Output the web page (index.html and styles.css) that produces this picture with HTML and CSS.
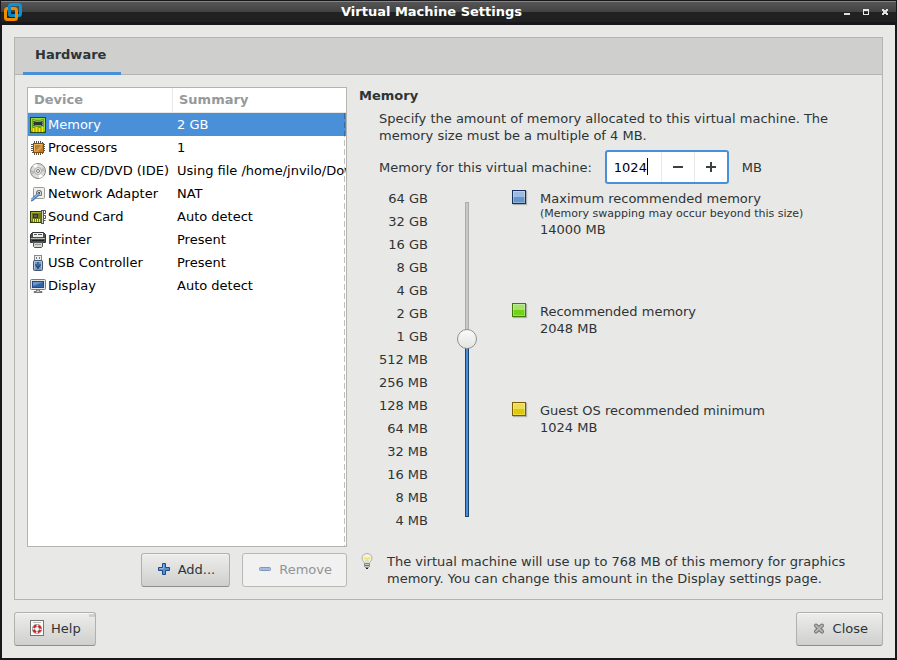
FILE: index.html
```html
<!DOCTYPE html>
<html lang="en">
<head>
<meta charset="utf-8">
<title>Virtual Machine Settings</title>
<link rel="stylesheet" href="styles.css">
</head>
<body>
<div class="window">
  <header class="titlebar">
    <svg class="app-icon" viewBox="0 0 18 18" width="18" height="18" fill="none" stroke-width="3">
      <rect x="5.500" y="1.500" width="11" height="11" rx="2" stroke="#0795d3"/>
      <rect x="1.500" y="5.500" width="11" height="11" rx="2" stroke="#f18b00"/>
      <path d="M5.500 3.500v7.500a1.500 1.500 0 0 0 1.500 1.500h2.500" stroke="#0b86bd" stroke-width="3"/>
    </svg>
    <h1 class="title">Virtual Machine Settings</h1>
    <div class="window-controls">
      <button class="wm" type="button" aria-label="Minimize"><svg viewBox="0 0 6 6" width="6" height="6"><path d="M0 4h6v2H0z" fill="#e0e0e0"/></svg></button>
      <button class="wm" type="button" aria-label="Maximize"><svg viewBox="0 0 6 6" width="6" height="6"><path fill-rule="evenodd" d="M0 0h6v6H0zM1 2v3h4V2z" fill="#e8e8e8"/></svg></button>
      <button class="wm" type="button" aria-label="Close window"><svg viewBox="0 0 6 6" width="6" height="6"><path d="M0 0h2v1h2V0h2v2H5v2h1v2H4V5H2v1H0V4h1V2H0z" fill="#e0e0e0"/></svg></button>
    </div>
  </header>

  <main class="dialog">
    <section class="notebook">
      <nav class="tabs"><button class="tab" type="button">Hardware</button></nav>
      <div class="page">
        <div class="devices">
          <div class="list">
            <table>
              <thead><tr><th>Device</th><th>Summary</th></tr></thead>
              <tbody>
                <tr class="selected">
                  <td><span class="device"><svg viewBox="0 0 16 16" width="16" height="16"><rect x=".5" y=".5" width="15" height="15" fill="#68a818" stroke="#254f05"/><path d="M1.500 14V1.500h13V14" fill="none" stroke="#9bdb35"/><rect x="3" y="4" width="10" height="5" fill="#555753"/><path d="M4 3v7M6 2v8M8 2v8M10 2v8M12 3v7" stroke="#c9ccc5" stroke-dasharray="1 1"/><rect x="4" y="5" width="8" height="3" fill="#30342f"/><path d="M2 11h12v4H2z" fill="#7d8600"/><path d="M3.500 11v4M6.500 10v5M9.500 11v4M12.500 10v5" stroke="#fce900" stroke-width="2"/></svg>Memory</span></td>
                  <td>2 GB</td>
                </tr>
                <tr>
                  <td><span class="device"><svg viewBox="0 0 16 16" width="16" height="16"><path d="M4.500 1v14M6.500 1v14M8.500 1v14M10.500 1v14M12.500 2v12M1 4.500h14M1 6.500h14M1 8.500h14M1 10.500h14M2 12.500h12" stroke="#555753"/><rect x="3.500" y="3.500" width="10" height="9" fill="#c17d24" stroke="#8f4b02"/><path d="M4.500 11.500v-7h8" fill="none" stroke="#edb866"/><path d="M5 11l6-6h1v3l-4 4H5z" fill="#d39a4c"/></svg>Processors</span></td>
                  <td>1</td>
                </tr>
                <tr>
                  <td><span class="device"><svg viewBox="0 0 16 16" width="16" height="16"><circle cx="8" cy="8" r="7.500" fill="#dcdcda" stroke="#888a85"/><path d="M8 8L3 2.500a7 7 0 0 1 4-1.400zM8 8l5 5.500a7 7 0 0 1-4 1.400z" fill="#fff"/><path d="M8 8l6-3.500a7 7 0 0 1 1 4zM8 8l-6 3.500a7 7 0 0 1-1-4z" fill="#bcbdb9"/><circle cx="8" cy="8" r="3.500" fill="#eee" stroke="#aaa"/><circle cx="8" cy="8" r="1.500" fill="#fff" stroke="#777"/></svg>New CD/DVD (IDE)</span></td>
                  <td>Using file /home/jnvilo/Dow</td>
                </tr>
                <tr>
                  <td><span class="device"><svg viewBox="0 0 16 16" width="16" height="16"><rect x="3.500" y="1.500" width="11" height="11" rx="1" fill="#eeeeec" stroke="#9a9c97"/><path d="M6.500 9.500v-4h1v-1h3v1h1v4z" fill="#d3d7cf" stroke="#777a75"/><rect x="8" y="6" width="2" height="2" fill="#555753"/><path d="M1 14c2 0 2-1 4-3l4-3" fill="none" stroke="#4f7fbc" stroke-width="3"/><path d="M1 13.500c2 0 2-1 4-3l4-3" fill="none" stroke="#a9c6e8"/></svg>Network Adapter</span></td>
                  <td>NAT</td>
                </tr>
                <tr>
                  <td><span class="device"><svg viewBox="0 0 16 16" width="16" height="16"><rect x=".5" y="2.500" width="11" height="11" fill="#747c13" stroke="#313d05"/><path d="M1.500 12V3.500H11" fill="none" stroke="#a6b22a"/><path d="M3 5h5v4H3z" fill="#2e3436"/><path d="M4 6h3v2H4z" fill="#5d6358"/><path d="M3.500 10v3M5.500 10v3M7.500 10v3M9.500 10v3" stroke="#f8ee20"/><path d="M12.500 1v14" stroke="#555753" stroke-width="3"/><path d="M14 1.500h1.500v3H14M14 6.500h1.500v3H14M14 11.500h1.500" fill="none" stroke="#555753"/><path d="M12.500 2v12" stroke="#d3d7cf"/></svg>Sound Card</span></td>
                  <td>Auto detect</td>
                </tr>
                <tr>
                  <td><span class="device"><svg viewBox="0 0 16 16" width="16" height="16"><path d="M.5 6.500v-4l2-2h11l2 2v8h-2l-1 1h-9l-1-1h-2z" fill="#4a4d4f" stroke="#2e3436"/><rect x="3" y="1" width="10" height="4" fill="#eeeeec"/><path d="M4 2.500h3M8 2.500h4" stroke="#555"/><path d="M1 6.500h14" stroke="#babdb6"/><path d="M2 8.500h12" stroke="#1d2022"/><path d="M3.500 10.500h9v4l-1 1h-7l-1-1z" fill="#d3d7cf" stroke="#555753"/><path d="M5 12.500h6" stroke="#999"/></svg>Printer</span></td>
                  <td>Present</td>
                </tr>
                <tr>
                  <td><span class="device"><svg viewBox="0 0 16 16" width="16" height="16"><rect x="4.500" y=".5" width="7" height="5" fill="#eeeeec" stroke="#888a85"/><path d="M6 2h1v2H6zM9 2h1v2H9z" fill="#777"/><rect x="3.500" y="5.500" width="9" height="10" rx="1" fill="#6d98c9" stroke="#47566a"/><path d="M4.500 14.500v-8h7v8" fill="none" stroke="#a8c5e5"/><path d="M8 7v7M6 9v2l2 1.500 2-1.500V9" fill="none" stroke="#15375f"/></svg>USB Controller</span></td>
                  <td>Present</td>
                </tr>
                <tr>
                  <td><span class="device"><svg viewBox="0 0 16 16" width="16" height="16"><rect x=".5" y="1.500" width="15" height="10" rx="1" fill="#e4e6e1" stroke="#77797a"/><rect x="2.500" y="3.500" width="11" height="6" fill="#3465a4" stroke="#204a87"/><path d="M3 4h10L3 8z" fill="#6b96c9"/><path d="M6.500 12h3v1.500h2.500v1H4v-1h2.500z" fill="#d3d7cf" stroke="#777"/></svg>Display</span></td>
                  <td>Auto detect</td>
                </tr>
              </tbody>
            </table>
          </div>
          <div class="list-actions">
            <button class="button" type="button"><svg viewBox="0 0 14 14" width="14" height="14"><path d="M5.500 1.500h3v4h4v3h-4v4h-3v-4h-4v-3h4z" fill="#5b8fce" stroke="#204a87" stroke-linejoin="round"/><path d="M6.500 2.500v4h-4" fill="none" stroke="#8fb6e2"/></svg>Add...</button>
            <button class="button" type="button" disabled><svg viewBox="0 0 14 14" width="14" height="14"><rect x="1.500" y="5.500" width="11" height="3" rx="1" fill="#a3bddd" stroke="#8197b8"/></svg>Remove</button>
          </div>
        </div>

        <div class="settings">
          <h2>Memory</h2>
          <p class="intro">Specify the amount of memory allocated to this virtual machine. The memory size must be a multiple of 4 MB.</p>
          <div class="amount">
            <label for="memory">Memory for this virtual machine:</label>
            <div class="spin">
              <input id="memory" type="text" inputmode="numeric" value="1024">
              <span class="caret"></span>
              <button type="button" aria-label="Decrease"><svg viewBox="0 0 12 12" width="12" height="12"><path d="M1 5h10v2H1z" fill="#3b4042"/></svg></button>
              <button type="button" aria-label="Increase"><svg viewBox="0 0 12 12" width="12" height="12"><path d="M1 5h4V1h2v4h4v2H7v4H5V7H1z" fill="#3b4042"/></svg></button>
            </div>
            <span>MB</span>
          </div>
          <div class="scale">
            <ol class="ticks">
              <li>64 GB</li><li>32 GB</li><li>16 GB</li><li>8 GB</li><li>4 GB</li><li>2 GB</li><li>1 GB</li><li>512 MB</li><li>256 MB</li><li>128 MB</li><li>64 MB</li><li>32 MB</li><li>16 MB</li><li>8 MB</li><li>4 MB</li>
            </ol>
            <input class="slider" type="range" min="0" max="14" value="8" aria-label="Memory size">
            <ul class="legend">
              <li><i class="swatch blue"></i><div>Maximum recommended memory<small>(Memory swapping may occur beyond this size)</small>14000 MB</div></li>
              <li><i class="swatch green"></i><div>Recommended memory<br>2048 MB</div></li>
              <li><i class="swatch yellow"></i><div>Guest OS recommended minimum<br>1024 MB</div></li>
            </ul>
          </div>
          <div class="hint">
            <svg viewBox="0 0 16 16" width="16" height="16"><path d="M5.500 10.500C5.500 8.500 3 8 3 5a5 4.500 0 0 1 10 0c0 3-2.500 3.500-2.500 5.500z" fill="#f4f3dc" stroke="#aeb0aa"/><path d="M5 4.500c1 2 2 0 3 1.500 1-1.500 2 .5 3-1.500" fill="none" stroke="#ece57c" stroke-width="2"/><path d="M7 7v3M9 7v3" stroke="#c9c9b8"/><path d="M5.500 10.500h5v3l-1 1h-3l-1-1z" fill="#c5c7c2" stroke="#888a85"/><path d="M6 12.500h4" stroke="#777"/><path d="M7 15h2v1H7z" fill="#222"/></svg>
            <p>The virtual machine will use up to 768 MB of this memory for graphics memory. You can change this amount in the Display settings page.</p>
          </div>
        </div>
      </div>
    </section>

    <footer class="actions">
      <button class="button help" type="button"><svg viewBox="1 0 14 16" width="14" height="16"><rect x="1.500" y=".5" width="13" height="15" fill="#fafafa" stroke="#73756f"/><path d="M4 2.500h8" stroke="#babdb6"/><circle cx="8" cy="9" r="3.500" fill="none" stroke="#777" stroke-width="3"/><circle cx="8" cy="9" r="3.500" fill="none" stroke="#eee" stroke-width="2"/><circle cx="8" cy="9" r="3.500" fill="none" stroke="#d01818" stroke-width="2" stroke-dasharray="3.500 2" stroke-dashoffset="-1"/></svg>Help</button>
      <button class="button" type="button"><svg viewBox="0 0 14 14" width="14" height="14"><path d="M4 4.500l6 6M10 4.500l-6 6" stroke="#73756f" stroke-width="4" stroke-linecap="round"/><path d="M4 4.500l6 6M10 4.500l-6 6" stroke="#b5b7b2" stroke-width="2" stroke-linecap="round"/></svg>Close</button>
    </footer>
  </main>
</div>
</body>
</html>
```
FILE: styles.css
```css
* { box-sizing: border-box; }

body {
  margin: 0;
  background: #18171b;
  color: #2e3436;
  font: 13px/17px "DejaVu Sans", sans-serif;
}

button, input { font: inherit; color: inherit; margin: 0; }
h1, h2, p, ol, ul { margin: 0; padding: 0; }
h1, h2 { font-size: 13px; font-weight: bold; }
ol, ul { list-style: none; }
svg { display: block; flex: none; }

.window {
  min-height: 100vh;
  display: flex;
  flex-direction: column;
  padding: 0 2px 2px;
}

.titlebar {
  display: flex;
  height: 25px;
  padding: 2px 5px 3px 3px;
  margin: 0 -1px;
  border-top: 1px solid #18171b;
  background: linear-gradient(#858585 0 1px, #565656 1px, #424242 11px, #212121 11px 21px, #18171b 21px);
}
.title { flex: 1; text-align: center; color: #fff; }
.window-controls { display: flex; gap: 7px; padding-top: 3px; }
.wm {
  width: 12px;
  height: 12px;
  padding: 3px;
  border: 0;
  background: none;
}

.dialog {
  flex: 1;
  display: flex;
  flex-direction: column;
  gap: 12px;
  padding: 12px;
  background: #e8e8e6;
}

.notebook {
  flex: 1;
  display: flex;
  flex-direction: column;
  border: 1px solid #b4b4b2;
}
.tabs {
  display: flex;
  height: 37px;
  padding-left: 8px;
  background: #cfcfcd;
  box-shadow: inset 0 -1px #b4b4b2;
}
.tab {
  min-width: 98px;
  padding: 0 12px 2px;
  border: 0;
  border-bottom: 3px solid #4a90d9;
  background: none;
  font-weight: bold;
  text-align: left;
}

.page {
  flex: 1;
  display: grid;
  grid-template-columns: 320px 1fr;
  gap: 12px;
  padding: 12px;
}

.devices { display: flex; flex-direction: column; gap: 6px; }
.list {
  flex: 1;
  position: relative;
  overflow: hidden;
  border: 1px solid #b4b4b2;
  background: #fff;
  color: #000;
}
.list::after {
  content: "";
  position: absolute;
  top: 25px;
  bottom: 0;
  right: 1px;
  width: 1px;
  background: repeating-linear-gradient(rgba(0, 0, 0, .25) 0 6px, transparent 6px 9px);
}
.list table { width: 100%; table-layout: fixed; border-collapse: separate; border-spacing: 0; }
.list th {
  height: 25px;
  padding: 0 6px 2px;
  border-bottom: 1px solid #e8e8e6;
  text-align: left;
  color: #96999a;
}
.list th:first-child { width: 145px; border-right: 1px solid #e8e8e6; }
.list td { height: 23px; padding: 0 2px; white-space: nowrap; overflow: hidden; }
.list td + td { padding-left: 4px; }
.device { display: flex; align-items: center; gap: 2px; }
.selected { background: #4a90d9; color: #fff; }

.list-actions { display: flex; justify-content: flex-end; gap: 12px; }
.button {
  display: flex;
  align-items: center;
  gap: 7px;
  height: 34px;
  padding: 0 14px 2px 15px;
  border: 1px solid #b0b0ae;
  border-bottom-color: #8e8e8c;
  border-radius: 3px;
  background: linear-gradient(#ededeb, #cfcfcd);
  box-shadow: inset 0 1px #f6f6f5;
}
.button:disabled {
  border-color: #b8b8b6;
  background: #f1f1f1;
  box-shadow: none;
  color: #929496;
}

.intro { margin: 6px 0 6px 20px; max-width: 475px; }
.amount { display: flex; align-items: center; gap: 13px; margin-left: 20px; }
.spin {
  position: relative;
  display: flex;
  height: 34px;
  border: 2px solid #4a90d9;
  border-radius: 3px;
  background: #fff;
}
.spin input {
  width: 54px;
  padding: 0 7px;
  border: 0;
  outline: 0;
  background: none;
  color: #000;
}
.caret {
  position: absolute;
  left: 40px;
  top: 6px;
  width: 1px;
  height: 17px;
  background: #000;
}
.spin button {
  width: 33px;
  display: grid;
  place-items: center;
  padding: 0;
  border: 0;
  border-left: 1px solid #e8e8e6;
  background: none;
}

.scale { display: flex; margin: 3px 0 21px 20px; }
.ticks { flex: none; width: 49px; }
.ticks li {
  display: flex;
  justify-content: flex-end;
  height: 23px;
  line-height: 23px;
  white-space: nowrap;
}
.slider {
  appearance: none;
  flex: none;
  writing-mode: vertical-lr;
  direction: rtl;
  width: 20px;
  height: 315px;
  margin: 15px 35px 0 29px;
  background: none;
}
.slider::-webkit-slider-runnable-track {
  width: 4px;
  height: 100%;
  border: 1px solid #acacaa;
  border-radius: 2px;
  background: linear-gradient(90deg, #4a90d9, #4a90d9) 0 100% / 100% 57% no-repeat border-box, #c8c8c6;
  border-image: linear-gradient(#acacaa 43%, #184472 43%) 1;
}
.slider::-webkit-slider-thumb {
  appearance: none;
  width: 20px;
  height: 20px;
  margin-left: -9px;
  border: 1px solid #90908e;
  border-radius: 50%;
  background: linear-gradient(#fafafa, #e4e4e2);
}

.legend { display: flex; flex-direction: column; gap: 65px; padding-top: 3px; }
.legend li { display: flex; gap: 14px; }
.legend small { display: block; font-size: 11px; line-height: 14px; }
.swatch {
  flex: none;
  width: 14px;
  height: 14px;
  border: 1px solid;
  box-shadow: 1px 1px 1px #b0b0ae, inset 0 0 0 1px rgba(255, 255, 255, .3);
}
.blue { border-color: #16315f; background: linear-gradient(#9dbbe0 50%, #6694cc 50%); }
.green { border-color: #3d7a06; background: linear-gradient(#a6e36c 50%, #73d216 50%); }
.yellow { border-color: #7a5d00; background: linear-gradient(#eedc55 50%, #dfc900 50%); }

.hint { display: flex; gap: 12px; }
.hint p { max-width: 475px; }

.actions { display: flex; justify-content: space-between; }
.help { position: relative; }
.help::after {
  content: "";
  position: absolute;
  top: 1px;
  right: 0;
  width: 6px;
  height: 3px;
  background: #cfcfcd;
}
```
